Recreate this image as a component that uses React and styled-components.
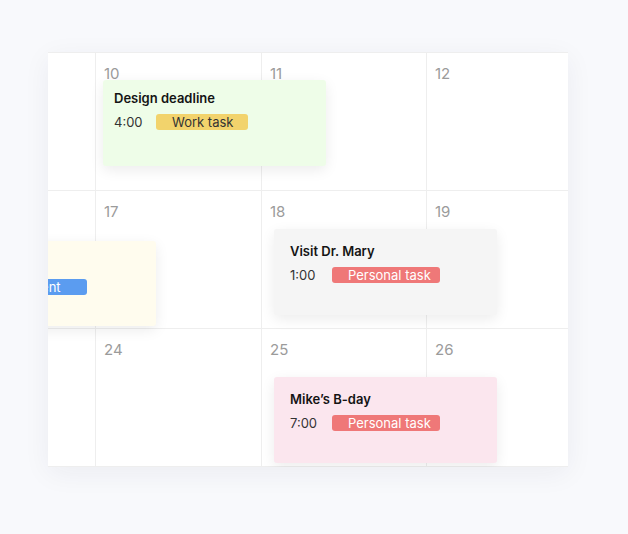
import React from 'react';
import styled, { createGlobalStyle } from 'styled-components';

const GlobalStyle = createGlobalStyle`
  html, body { margin: 0; padding: 0; background: #f8f9fc; }
  body {
    font-family: Inter, "Noto Sans", sans-serif;
    -webkit-font-smoothing: antialiased;
  }
`;

const Page = styled.div`
  width: 628px;
  height: 534px;
  box-sizing: border-box;
  padding: 52px 0 0 48px;
`;

const Calendar = styled.div`
  position: relative;
  width: 520px;
  height: 415px;
  overflow: hidden;
  background: #ffffff;
  box-shadow: 0 6px 26px rgba(30, 40, 70, 0.06);
`;

const Grid = styled.div`
  display: grid;
  grid-template-columns: 166px 166px 165px 165px;
  grid-auto-rows: 138px;
  margin-left: -118px;
  border-top: 1px solid #eeeeee;
`;

const Cell = styled.div`
  box-sizing: border-box;
  border-right: 1px solid #eeeeee;
  border-bottom: 1px solid #eeeeee;
  padding: 10px 8px;
`;

const DayNum = styled.span`
  font-size: 15px;
  line-height: 18px;
  color: #9b9b9b;
`;

const EventCard = styled.div`
  position: absolute;
  left: ${(p) => p.$x}px;
  top: ${(p) => p.$y}px;
  width: 223px;
  height: ${(p) => p.$h}px;
  box-sizing: border-box;
  padding: ${(p) => p.$pad};
  background: ${(p) => p.$bg};
  border-radius: 3px;
  box-shadow: 0 4px 14px rgba(0, 0, 0, 0.08);
`;

const Title = styled.div`
  font-size: 13px;
  line-height: 16px;
  font-weight: 600;
  color: #141414;
  white-space: nowrap;
`;

const MetaRow = styled.div`
  display: flex;
  align-items: center;
  margin-top: 8px;
  height: 16px;
`;

const Time = styled.span`
  width: 42px;
  flex: none;
  font-size: 13px;
  line-height: 16px;
  color: #333333;
`;

const Tag = styled.span`
  box-sizing: border-box;
  width: ${(p) => p.$w}px;
  height: 16px;
  padding-left: 16px;
  font-size: 13px;
  line-height: 16px;
  border-radius: 3px;
  white-space: nowrap;
  overflow: hidden;
  background: ${(p) => p.$bg};
  color: ${(p) => p.$fg};
`;

const days = [
  [9, 10, 11, 12],
  [16, 17, 18, 19],
  [23, 24, 25, 26],
];

const events = [
  {
    title: 'Design deadline', time: '4:00', tag: 'Work task', tagW: 92,
    tagBg: '#f2d36c', tagFg: '#333333', bg: '#eefde8',
    x: 55, y: 28, h: 86, pad: '10px 11px',
  },
  {
    title: 'Team meeting', time: '2:00', tag: 'Payment', tagW: 96,
    tagBg: '#5b9cf0', tagFg: '#ffffff', bg: '#fffcee',
    x: -115, y: 189, h: 85, pad: '14px 16px',
  },
  {
    title: 'Visit Dr. Mary', time: '1:00', tag: 'Personal task', tagW: 108,
    tagBg: '#ef7878', tagFg: '#ffffff', bg: '#f5f5f5',
    x: 226, y: 177, h: 86, pad: '14px 16px',
  },
  {
    title: 'Mike\u2019s B-day', time: '7:00', tag: 'Personal task', tagW: 108,
    tagBg: '#ef7878', tagFg: '#ffffff', bg: '#fbe6ee',
    x: 226, y: 325, h: 86, pad: '14px 16px',
  },
];

export default function App() {
  return (
    <>
      <GlobalStyle />
      <Page>
        <Calendar>
          <Grid>
            {days.flat().map((d) => (
              <Cell key={d}>
                <DayNum>{d}</DayNum>
              </Cell>
            ))}
          </Grid>
          {events.map((e) => (
            <EventCard key={e.title} $x={e.x} $y={e.y} $h={e.h} $pad={e.pad} $bg={e.bg}>
              <Title>{e.title}</Title>
              <MetaRow>
                <Time>{e.time}</Time>
                <Tag $w={e.tagW} $bg={e.tagBg} $fg={e.tagFg}>{e.tag}</Tag>
              </MetaRow>
            </EventCard>
          ))}
        </Calendar>
      </Page>
    </>
  );
}
